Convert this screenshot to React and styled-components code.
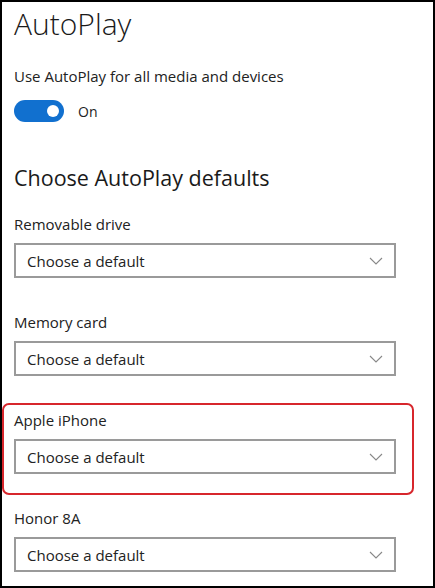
import React from "react";
import styled, { createGlobalStyle } from "styled-components";

const GlobalStyle = createGlobalStyle`
  html, body {
    margin: 0;
    padding: 0;
    background: #fff;
  }
  body {
    font-family: "Open Sans", "Noto Sans", sans-serif;
    color: #1a1a1a;
  }
`;

const Frame = styled.div`
  width: 435px;
  height: 588px;
  box-sizing: border-box;
  border: 2px solid #000;
  overflow: hidden;
  padding: 0 0 0 12px;
  display: flex;
  flex-direction: column;
`;

const Title = styled.h1`
  margin: 2px 0 0;
  font-size: 30px;
  font-weight: 300;
  line-height: 40px;
  color: #1a1a1a;
`;

const Caption = styled.div`
  margin-top: 22px;
  font-size: 15px;
  line-height: 20px;
  color: #222;
`;

const ToggleRow = styled.div`
  display: flex;
  align-items: center;
  gap: 14px;
  margin-top: 14px;
`;

const Switch = styled.div`
  width: 50px;
  height: 22px;
  border-radius: 11px;
  background: #1170cf;
  display: flex;
  align-items: center;
  justify-content: flex-end;
  padding-right: 5px;
  box-sizing: border-box;
`;

const Knob = styled.span`
  width: 12px;
  height: 12px;
  border-radius: 50%;
  background: #fff;
`;

const ToggleText = styled.span`
  font-size: 14px;
  color: #222;
`;

const Heading = styled.h2`
  margin: 41px 0 0;
  font-size: 21.5px;
  font-weight: 400;
  line-height: 30px;
  color: #1a1a1a;
`;

const List = styled.div`
  display: flex;
  flex-direction: column;
  margin-top: 14px;
`;

const Group = styled.div`
  box-sizing: border-box;
  width: 412px;
  margin-left: -12px;
  padding: 5px 0 0 10px;
  border: 2px solid ${(p) => (p.$highlight ? "#d7262c" : "transparent")};
  border-radius: 7px;
  height: 92px;
  margin-bottom: 6px;
`;

const Label = styled.div`
  font-size: 15px;
  line-height: 20px;
  color: #222;
`;

const Select = styled.div`
  margin-top: 9px;
  width: 382px;
  height: 35px;
  box-sizing: border-box;
  border: 2px solid #9a9a9a;
  display: flex;
  align-items: center;
  justify-content: space-between;
  padding: 0 11px 0 11px;
  font-size: 15px;
  color: #222;
`;

const Chevron = () => (
  <svg width="14" height="8" viewBox="0 0 14 8" fill="none">
    <path d="M1 1l6 6 6-6" stroke="#888" strokeWidth="1.1" />
  </svg>
);

const devices = [
  { name: "Removable drive" },
  { name: "Memory card" },
  { name: "Apple iPhone", highlight: true },
  { name: "Honor 8A" },
];

export default function App() {
  return (
    <>
      <GlobalStyle />
      <Frame>
        <Title>AutoPlay</Title>
        <Caption>Use AutoPlay for all media and devices</Caption>
        <ToggleRow>
          <Switch>
            <Knob />
          </Switch>
          <ToggleText>On</ToggleText>
        </ToggleRow>
        <Heading>Choose AutoPlay defaults</Heading>
        <List>
          {devices.map((d) => (
            <Group key={d.name} $highlight={d.highlight}>
              <Label>{d.name}</Label>
              <Select>
                <span>Choose a default</span>
                <Chevron />
              </Select>
            </Group>
          ))}
        </List>
      </Frame>
    </>
  );
}
